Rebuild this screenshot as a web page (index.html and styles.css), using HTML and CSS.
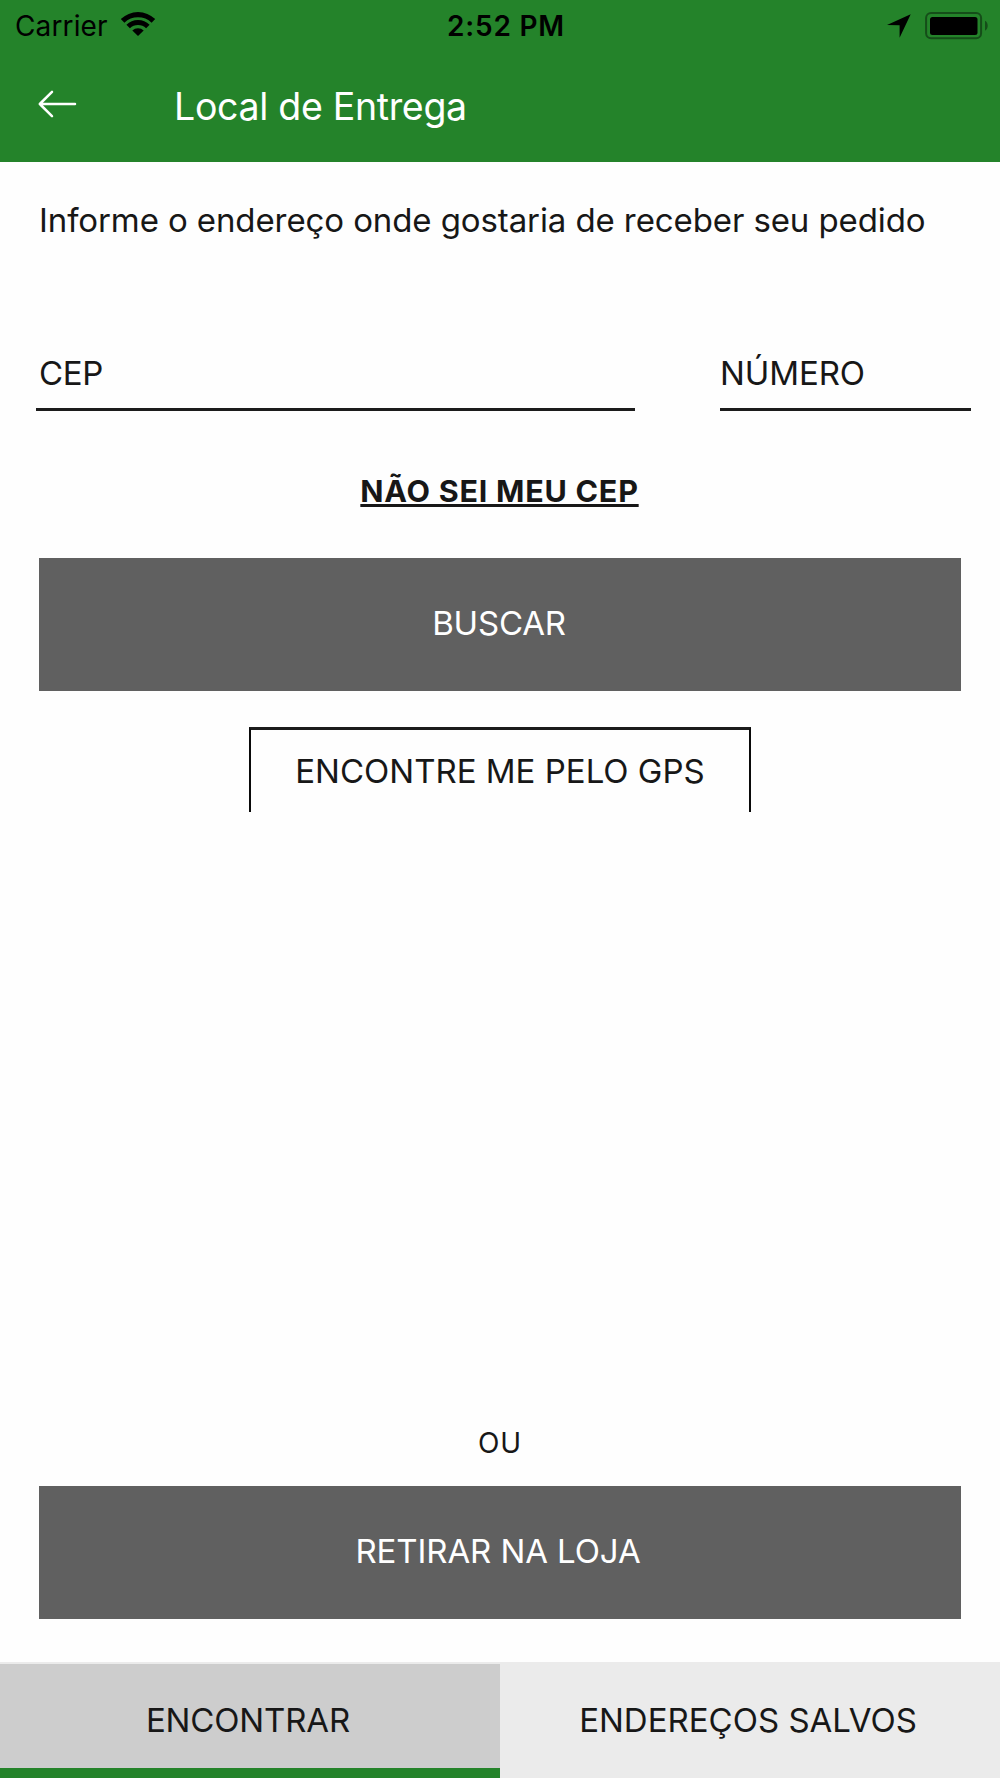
FILE: index.html
```html
<!DOCTYPE html>
<html lang="pt-BR">
<head>
  <meta charset="utf-8">
  <title>Local de Entrega</title>
  <link rel="stylesheet" href="styles.css">
</head>
<body>
  <div class="screen">
    <header class="header">
      <div class="status">
        <div class="status-left">
          <span class="carrier">Carrier</span>
          <svg class="wifi" width="36" height="26" viewBox="0 0 36 26">
            <path d="M.8 8.1A24.6 24.6 0 0 1 35.2 8.1L31.6 11.7A19.5 19.5 0 0 0 4.4 11.7Z"/>
            <path d="M6.4 13.7A16.7 16.7 0 0 1 29.6 13.7L26.1 17.2A11.7 11.7 0 0 0 9.9 17.2Z"/>
            <path d="M12.3 19.5A8.2 8.2 0 0 1 23.7 19.5L18 25.1Z"/>
          </svg>
        </div>
        <span class="time">2:52 PM</span>
        <div class="status-right">
          <svg class="location" width="24" height="24" viewBox="0 0 24 24">
            <path d="M0 11 23.7.2 12.6 23.8V11.2Z"/>
          </svg>
          <svg class="battery" width="64" height="28" viewBox="0 0 64 28">
            <rect x="1.1" y="1.1" width="55" height="25.2" rx="5" fill="none" stroke="#154d19" stroke-width="2"/>
            <rect x="5" y="5" width="47.5" height="18" rx="2.5"/>
            <path d="M60 8.8C63.6 10.5 63.6 17 60 18.8Z" fill="#154d19"/>
          </svg>
        </div>
      </div>
      <div class="titlebar">
        <svg class="back" width="39" height="28" viewBox="0 0 39 28">
          <path d="M37 14H1.8M14 1.8 1.8 14 14 26.2" fill="none" stroke="#fff" stroke-width="2.5" stroke-linecap="round" stroke-linejoin="round"/>
        </svg>
        <h1 class="title">Local de Entrega</h1>
      </div>
    </header>

    <main class="main">
      <p class="intro">Informe o endereço onde gostaria de receber seu pedido</p>
      <div class="fields">
        <div class="field field-cep">CEP</div>
        <div class="field field-number">NÚMERO</div>
      </div>
      <a class="link">NÃO SEI MEU CEP</a>
      <div class="button button-search">BUSCAR</div>
      <div class="gps">ENCONTRE ME PELO GPS</div>
      <p class="or">OU</p>
      <div class="button button-store">RETIRAR NA LOJA</div>
    </main>

    <nav class="tabs">
      <div class="tab tab-active">ENCONTRAR</div>
      <div class="tab">ENDEREÇOS SALVOS</div>
    </nav>
  </div>
</body>
</html>
```
FILE: styles.css
```css
* {
  box-sizing: border-box;
}

body {
  margin: 0;
}

.screen {
  display: flex;
  flex-direction: column;
  width: 1000px;
  height: 1778px;
  overflow: hidden;
  background: #fefefe;
  color: #171717;
  font: 400 33px/40px Inter, "Liberation Sans", sans-serif;
}

.header {
  height: 162px;
  background: #24832a;
}

.status {
  display: grid;
  grid-template-columns: 1fr auto 1fr;
  align-items: center;
  height: 50px;
  padding: 1px 12px 0 15px;
  color: #000;
  font-size: 28px;
}

.status-left,
.status-right {
  display: flex;
  align-items: center;
}

.carrier {
  letter-spacing: 0.13px;
}

.wifi {
  margin: -3px 0 0 12px;
}

.time {
  padding-left: 9px;
  font-weight: 600;
  letter-spacing: 0.78px;
}

.status-right {
  justify-content: flex-end;
}

.location {
  margin-right: 14px;
}

.battery {
  margin-right: -1px;
}

.titlebar {
  display: flex;
  align-items: center;
  height: 112px;
  padding-left: 38px;
}

.back {
  margin-top: -4px;
}

.title {
  margin: 1px 0 0 97px;
  color: #fff;
  font-size: 37.5px;
  font-weight: 400;
  letter-spacing: -0.32px;
}

.main {
  display: flex;
  flex: 1;
  flex-direction: column;
  padding: 38px 39px 43px;
}

.intro {
  margin: 0;
  letter-spacing: -0.1px;
  white-space: nowrap;
}

.fields {
  display: flex;
  gap: 85px;
  margin: 113px -10px 0 -3px;
}

.field {
  height: 58px;
  padding-left: 3px;
  border-bottom: 3px solid #1c1c1c;
  letter-spacing: -0.1px;
}

.field-cep {
  width: 599px;
  letter-spacing: -0.3px;
}

.field-number {
  width: 251px;
  padding-left: 0;
}

.link {
  align-self: center;
  margin: 60px 1px 0 0;
  font-size: 30.5px;
  font-weight: 700;
  letter-spacing: 0.75px;
  text-decoration: underline;
  text-decoration-color: #171717;
  text-decoration-skip-ink: none;
  text-decoration-thickness: 3px;
  text-underline-offset: 2px;
}

.button {
  display: flex;
  flex-shrink: 0;
  align-items: center;
  justify-content: center;
  height: 133px;
  padding-bottom: 3px;
  background: #606060;
  color: #fff;
}

.button-search {
  margin-top: 47px;
  padding-right: 2px;
  letter-spacing: -0.2px;
}

.gps {
  align-self: center;
  width: 502px;
  height: 85px;
  margin-top: 36px;
  padding-top: 21px;
  border: solid #0a0a0a;
  border-width: 3px 2px 0;
  border-top-color: #1c1c1c;
  text-align: center;
}

.or {
  margin: auto 0 23px;
  font-size: 28px;
  letter-spacing: 0.8px;
  text-align: center;
}

.button-store {
  padding-right: 4px;
  letter-spacing: -0.09px;
}

.tabs {
  display: grid;
  grid-template-columns: 1fr 1fr;
  height: 116px;
  border-top: 2px solid #ebebeb;
  text-align: center;
}

.tab {
  padding: 36px 4px 0 0;
  background: #ebebeb;
}

.tab-active {
  border-bottom: 10px solid #24832a;
  background: #cdcdcd;
  letter-spacing: -0.15px;
}
```
